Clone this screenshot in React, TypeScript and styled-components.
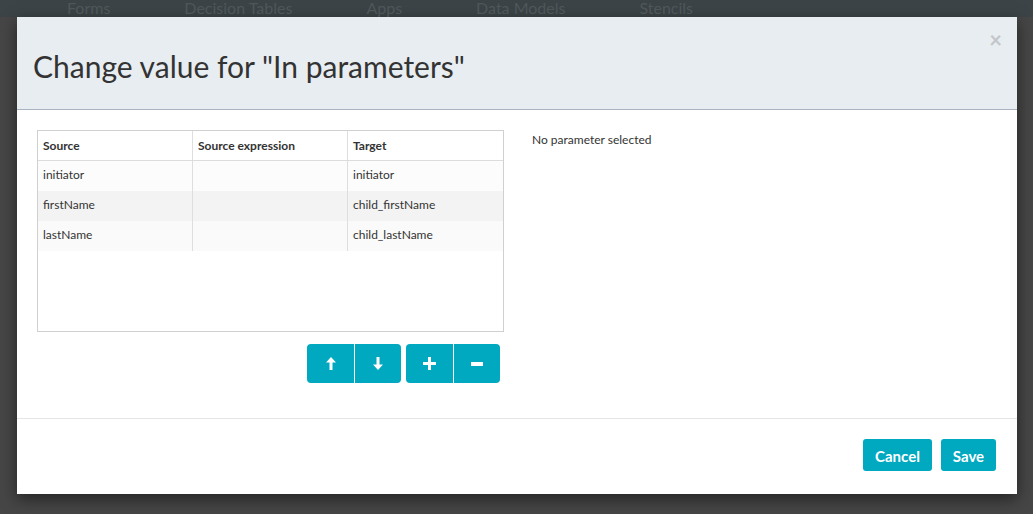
import React from 'react'
import styled, { createGlobalStyle } from 'styled-components'

const GlobalStyle = createGlobalStyle`
  html, body {
    margin: 0;
    padding: 0;
    background: #464646;
    font-family: Lato, "Open Sans", sans-serif;
  }
  * { box-sizing: border-box; }
`

const Page = styled.div`
  width: 1033px;
  height: 514px;
  overflow: hidden;
  background: #464646;
`

const NavStrip = styled.div`
  height: 17px;
  background: #3c4447;
  display: flex;
  align-items: flex-start;
  gap: 74px;
  padding-left: 67px;
`

const NavItem = styled.span`
  font-size: 16px;
  line-height: 15px;
  color: #4f5659;
  white-space: nowrap;
`

const Modal = styled.div`
  margin: 0 16px 0 17px;
  width: 1000px;
  height: 477px;
  background: #fff;
  box-shadow: 0 5px 15px rgba(0, 0, 0, 0.5);
  display: flex;
  flex-direction: column;
`

const Header = styled.div`
  position: relative;
  height: 93px;
  background: #e8edf1;
  border-bottom: 1px solid #a9b3c1;
  padding: 6px 16px 0;
  display: flex;
  align-items: center;
`

const Title = styled.h1`
  margin: 0;
  font-size: 30px;
  font-weight: 400;
  color: #333;
`

const Close = styled.span`
  position: absolute;
  top: 12px;
  right: 15px;
  font-size: 22px;
  font-weight: 700;
  color: #c2c6ca;
  line-height: 22px;
`

const Body = styled.div`
  height: 309px;
  padding: 20px 20px 0 20px;
  display: flex;
  gap: 28px;
  border-bottom: 1px solid #e5e5e5;
`

const LeftColumn = styled.div`
  width: 467px;
  display: flex;
  flex-direction: column;
`

const Grid = styled.div`
  height: 202px;
  border: 1px solid #d0d0d0;
  background: #fff;
`

const Row = styled.div<{ bg: string; head?: boolean }>`
  display: grid;
  grid-template-columns: 155px 155px 155px;
  height: 30px;
  background: ${({ bg }) => bg};
  border-bottom: ${({ head }) => (head ? '1px solid #dcdcdc' : 'none')};
`

const Cell = styled.div<{ head?: boolean; last?: boolean }>`
  display: flex;
  align-items: center;
  padding: 0 0 ${({ head }) => (head ? 0 : 3)}px 5px;
  font-size: 12px;
  font-weight: ${({ head }) => (head ? 700 : 400)};
  color: #333;
  border-right: ${({ last }) => (last ? 'none' : '1px solid #dedede')};
`

const ButtonBar = styled.div`
  display: flex;
  justify-content: flex-end;
  gap: 5px;
  padding-right: 4px;
  margin-top: 12px;
`

const ButtonGroup = styled.div`
  display: flex;
  border-radius: 4px;
  overflow: hidden;
`

const IconButton = styled.button<{ first?: boolean }>`
  width: 47px;
  height: 39px;
  border: none;
  padding: 0;
  background: #00a8c0;
  border-left: ${({ first }) => (first ? 'none' : '1px solid #fff')};
  display: flex;
  align-items: center;
  justify-content: center;
`

const Detail = styled.div`
  font-size: 12px;
  color: #333;
  padding-top: 2px;
`

const Footer = styled.div`
  flex: 1;
  display: flex;
  justify-content: flex-end;
  align-items: flex-start;
  gap: 9px;
  padding: 20px 21px 0 0;
`

const ActionButton = styled.button<{ w: number }>`
  width: ${({ w }) => w}px;
  height: 32px;
  border: none;
  border-radius: 3px;
  background: #00a8c0;
  color: #fff;
  font-family: Lato, "Open Sans", sans-serif;
  font-size: 15px;
  font-weight: 700;
  padding: 1px 0 0;
`

const UpIcon = () => (
  <svg width="10" height="13" viewBox="0 0 10 13">
    <path d="M5 0 L10 5.5 H6.5 V13 H3.5 V5.5 H0 Z" fill="#fff" />
  </svg>
)

const DownIcon = () => (
  <svg width="10" height="13" viewBox="0 0 10 13">
    <path d="M5 13 L10 7.5 H6.5 V0 H3.5 V7.5 H0 Z" fill="#fff" />
  </svg>
)

const PlusIcon = () => (
  <svg width="13" height="13" viewBox="0 0 13 13">
    <path d="M5 0h3v5h5v3H8v5H5V8H0V5h5z" fill="#fff" />
  </svg>
)

const MinusIcon = () => (
  <svg width="12" height="4" viewBox="0 0 12 4">
    <rect width="12" height="4" fill="#fff" />
  </svg>
)

const params = [
  { source: 'initiator', expr: '', target: 'initiator', bg: '#fcfcfc' },
  { source: 'firstName', expr: '', target: 'child_firstName', bg: '#f3f3f3' },
  { source: 'lastName', expr: '', target: 'child_lastName', bg: '#fafafa' },
]

const navItems = ['Forms', 'Decision Tables', 'Apps', 'Data Models', 'Stencils']

export default function App() {
  return (
    <Page>
      <GlobalStyle />
      <NavStrip>
        {navItems.map((n) => (
          <NavItem key={n}>{n}</NavItem>
        ))}
      </NavStrip>
      <Modal>
        <Header>
          <Title>Change value for "In parameters"</Title>
          <Close>×</Close>
        </Header>
        <Body>
          <LeftColumn>
            <Grid>
              <Row bg="#fff" head>
                <Cell head>Source</Cell>
                <Cell head>Source expression</Cell>
                <Cell head last>Target</Cell>
              </Row>
              {params.map((p) => (
                <Row key={p.source} bg={p.bg}>
                  <Cell>{p.source}</Cell>
                  <Cell>{p.expr}</Cell>
                  <Cell last>{p.target}</Cell>
                </Row>
              ))}
            </Grid>
            <ButtonBar>
              <ButtonGroup>
                <IconButton first><UpIcon /></IconButton>
                <IconButton><DownIcon /></IconButton>
              </ButtonGroup>
              <ButtonGroup>
                <IconButton first><PlusIcon /></IconButton>
                <IconButton><MinusIcon /></IconButton>
              </ButtonGroup>
            </ButtonBar>
          </LeftColumn>
          <Detail>No parameter selected</Detail>
        </Body>
        <Footer>
          <ActionButton w={69}>Cancel</ActionButton>
          <ActionButton w={55}>Save</ActionButton>
        </Footer>
      </Modal>
    </Page>
  )
}
